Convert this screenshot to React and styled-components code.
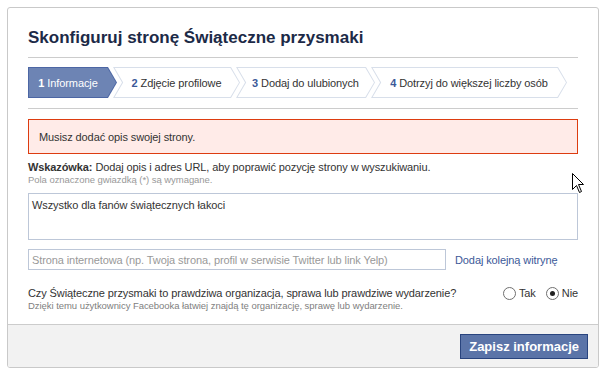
import React from "react";
import styled, { createGlobalStyle } from "styled-components";

const GlobalStyle = createGlobalStyle`
  html, body {
    margin: 0;
    padding: 0;
    background: #fff;
    font-family: "Liberation Sans", Arial, sans-serif;
    color: #333;
  }
  * { box-sizing: border-box; }
`;

const Page = styled.div`
  padding: 7px 0 0 7px;
  position: relative;
  width: 608px;
  height: 376px;
`;

const Card = styled.div`
  width: 592px;
  height: 361px;
  border: 1px solid #c9c9c9;
  border-radius: 3px;
  overflow: hidden;
  display: flex;
  flex-direction: column;
  background: #fff;
`;

const Body = styled.div`
  flex: 1;
  padding: 0 20px;
  letter-spacing: -0.1px;
`;

const Header = styled.div`
  padding: 20px 0 9px;
  border-bottom: 1px solid #ccc;
`;

const Title = styled.h1`
  margin: 0;
  font-size: 17px;
  line-height: 20px;
  font-weight: bold;
  letter-spacing: 0;
  color: #1c2a47;
`;

const StepsRow = styled.div`
  display: flex;
  padding: 9px 0 10px;
  border-bottom: 1px solid #ccc;
`;

const Step = styled.div`
  position: relative;
  height: 31px;
  width: ${(p) => p.$w}px;
  margin-left: ${(p) => (p.$first ? 0 : -4)}px;
  display: flex;
  align-items: center;
  justify-content: center;
  padding-left: ${(p) => (p.$first ? 0 : 9)}px;
  padding-right: 9px;
  font-size: 11px;
  color: ${(p) => (p.$active ? "#fff" : "#333")};
  background: ${(p) => (p.$active ? "#4c66a4" : "#d8dfea")};
  clip-path: ${(p) =>
    p.$first
      ? "polygon(0 0, calc(100% - 9px) 0, 100% 50%, calc(100% - 9px) 100%, 0 100%)"
      : "polygon(0 0, calc(100% - 9px) 0, 100% 50%, calc(100% - 9px) 100%, 0 100%, 9px 50%)"};

  &::before {
    content: "";
    position: absolute;
    inset: 1px;
    background: ${(p) => (p.$active ? "#6d84b4" : "#fff")};
    clip-path: ${(p) =>
      p.$first
        ? "polygon(0 0, calc(100% - 8.6px) 0, 100% 50%, calc(100% - 8.6px) 100%, 0 100%)"
        : "polygon(0.7px 0, calc(100% - 8.6px) 0, 100% 50%, calc(100% - 8.6px) 100%, 0.7px 100%, 9.2px 50%)"};
  }

  span {
    position: relative;
    white-space: nowrap;
  }

  b {
    color: ${(p) => (p.$active ? "#fff" : "#3b5998")};
  }
`;

const ErrorBox = styled.div`
  margin-top: 10px;
  height: 35px;
  border: 1px solid #dd3c10;
  background: #ffebe8;
  padding: 0 10px;
  display: flex;
  align-items: center;
  font-size: 11px;
  color: #333;
`;

const Hint = styled.div`
  margin-top: 6px;
  font-size: 11px;
  line-height: 14px;
  color: #333;

  b {
    color: #333;
  }
`;

const Note = styled.div`
  font-size: 9.5px;
  line-height: 12px;
  letter-spacing: -0.05px;
  color: ${(p) => p.$color || "#999"};
`;

const TextArea = styled.textarea`
  display: block;
  margin-top: 7px;
  width: 100%;
  height: 47px;
  border: 1px solid #bdc7d8;
  padding: 4px 3px;
  font-family: inherit;
  font-size: 11px;
  line-height: 14px;
  letter-spacing: -0.1px;
  color: #333;
  resize: none;
  outline: none;
`;

const UrlRow = styled.div`
  margin-top: 9px;
  display: flex;
  align-items: center;
  gap: 9px;
`;

const Input = styled.input`
  width: 418px;
  height: 21px;
  border: 1px solid #bdc7d8;
  padding: 0 3px;
  font-family: inherit;
  font-size: 11px;
  letter-spacing: -0.1px;
  color: #333;
  outline: none;

  &::placeholder {
    color: #999;
  }
`;

const LinkText = styled.a`
  font-size: 11px;
  color: #3b5998;
  text-decoration: none;
`;

const QuestionRow = styled.div`
  margin-top: 16px;
  display: flex;
  justify-content: space-between;
  align-items: flex-start;
`;

const Question = styled.div`
  font-size: 11px;
  line-height: 14px;
  color: #333;
`;

const Radios = styled.div`
  display: flex;
  gap: 10px;
  height: 14px;
  align-items: center;
`;

const RadioLabel = styled.label`
  display: flex;
  align-items: center;
  gap: 3px;
  font-size: 11px;
  color: #333;
`;

const RadioDot = styled.span`
  width: 13px;
  height: 13px;
  border-radius: 50%;
  border: 1px solid #6f6f6f;
  background: #fff;
  display: flex;
  align-items: center;
  justify-content: center;

  &::after {
    content: "";
    width: 5px;
    height: 5px;
    border-radius: 50%;
    background: ${(p) => (p.$checked ? "#222" : "transparent")};
  }
`;

const Footer = styled.div`
  height: 43px;
  border-top: 1px solid #ccc;
  background: #f2f2f2;
  display: flex;
  align-items: center;
  justify-content: flex-end;
  padding-right: 10px;
`;

const Button = styled.button`
  height: 25px;
  padding: 0 8px;
  border: 1px solid #29447e;
  background: #5b74a8;
  color: #fff;
  font-family: inherit;
  font-size: 13px;
  font-weight: bold;
  cursor: pointer;
`;

const Cursor = styled.svg`
  position: absolute;
  left: 572px;
  top: 173px;
`;

const steps = [
  { n: 1, label: "Informacje", w: 89 },
  { n: 2, label: "Zdjęcie profilowe", w: 127 },
  { n: 3, label: "Dodaj do ulubionych", w: 139 },
  { n: 4, label: "Dotrzyj do większej liczby osób", w: 196 },
];

export default function App() {
  return (
    <>
      <GlobalStyle />
      <Page>
        <Card>
          <Body>
            <Header>
              <Title>Skonfiguruj stronę Świąteczne przysmaki</Title>
            </Header>
            <StepsRow>
              {steps.map((s, i) => (
                <Step key={s.n} $w={s.w} $first={i === 0} $active={i === 0}>
                  <span>
                    <b>{s.n}</b> {s.label}
                  </span>
                </Step>
              ))}
            </StepsRow>
            <ErrorBox>Musisz dodać opis swojej strony.</ErrorBox>
            <Hint>
              <b>Wskazówka:</b> Dodaj opis i adres URL, aby poprawić pozycję strony w wyszukiwaniu.
            </Hint>
            <Note>Pola oznaczone gwiazdką (*) są wymagane.</Note>
            <TextArea defaultValue="Wszystko dla fanów świątecznych łakoci" />
            <UrlRow>
              <Input placeholder="Strona internetowa (np. Twoja strona, profil w serwisie Twitter lub link Yelp)" />
              <LinkText href="#">Dodaj kolejną witrynę</LinkText>
            </UrlRow>
            <QuestionRow>
              <div>
                <Question>
                  Czy Świąteczne przysmaki to prawdziwa organizacja, sprawa lub prawdziwe wydarzenie?
                </Question>
                <Note $color="#808080">
                  Dzięki temu użytkownicy Facebooka łatwiej znajdą tę organizację, sprawę lub wydarzenie.
                </Note>
              </div>
              <Radios>
                <RadioLabel>
                  <RadioDot />
                  Tak
                </RadioLabel>
                <RadioLabel>
                  <RadioDot $checked />
                  Nie
                </RadioLabel>
              </Radios>
            </QuestionRow>
          </Body>
          <Footer>
            <Button>Zapisz informacje</Button>
          </Footer>
        </Card>
        <Cursor width="13" height="21" viewBox="0 0 13 21">
          <path
            d="M0.5 0.5 L0.5 16.5 L4.5 12.5 L7.5 19.5 L9.5 18.5 L6.5 11.5 L11.5 11.5 Z"
            fill="#fff"
            stroke="#000"
            strokeWidth="1"
            strokeLinejoin="miter"
          />
        </Cursor>
      </Page>
    </>
  );
}
